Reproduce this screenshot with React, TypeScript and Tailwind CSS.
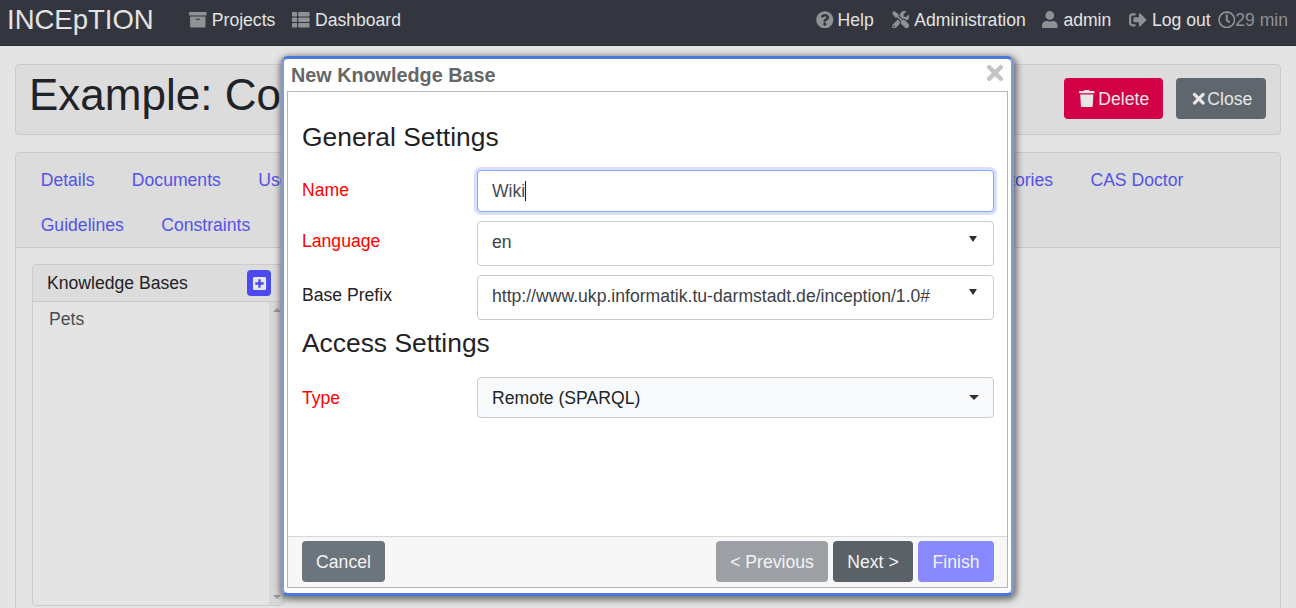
import React from "react";
import {
  FaArchive, FaThList, FaQuestionCircle, FaTools, FaUser, FaSignOutAlt, FaRegClock,
  FaTrash, FaTimes, FaPlusSquare,
} from "react-icons/fa";

function NavItem({ icon, label, className = "" }: { icon: React.ReactNode; label: string; className?: string }) {
  return (
    <a className={"flex items-center gap-[5px] text-[#e3e3e3] " + className}>
      <span className="text-[#8f9195]">{icon}</span>
      <span>{label}</span>
    </a>
  );
}

function Tab({ children }: { children: React.ReactNode }) {
  return <a className="px-[18.7px] h-[45px] flex items-center text-[#5353e6] whitespace-nowrap">{children}</a>;
}

function Caret({ className = "" }: { className?: string }) {
  return <span className={"w-0 h-0 border-x-[4.5px] border-x-transparent border-t-[6px] border-t-[#2f2f2f] " + className} />;
}

export default function App() {
  return (
    <div
      className="relative h-[608px] w-full overflow-hidden bg-[#e4e4e4] text-[17.6px] leading-[26px] text-[#1f2226]"
      style={{ fontFamily: '"Liberation Sans", Arial, sans-serif' }}
    >
      <nav className="h-[46px] bg-[#33363e] border-b border-[#2a2d33] flex items-center justify-between pl-[7px] pr-[8px] pb-[6px]">
        <div className="flex items-center">
          <span className="text-[27.5px] text-[#e3e3e3] mr-[35.5px]">INCEpTION</span>
          <NavItem icon={<FaArchive />} label="Projects" className="mr-[17px]" />
          <NavItem icon={<FaThList />} label="Dashboard" />
        </div>
        <div className="flex items-center">
          <a className="flex items-center gap-[4px] text-[#e3e3e3] mr-[18px]">
            <span className="text-[#8f9195]"><FaQuestionCircle /></span>
            <span>Help</span>
          </a>
          <NavItem icon={<FaTools />} label="Administration" className="mr-[15px]" />
          <NavItem icon={<FaUser />} label="admin" className="mr-[18px]" />
          <NavItem icon={<FaSignOutAlt />} label="Log out" className="mr-[7px]" />
          <span className="flex items-center text-[#8f9195]">
            <FaRegClock />
            <span>29 min</span>
          </span>
        </div>
      </nav>

      <div className="px-[15px] pt-[18px]">
        <div className="h-[71px] bg-[#dcdcdc] border border-[#cbcbcb] rounded-[4px] flex items-center justify-between pl-[13px] pr-[14px]">
          <h1 className="text-[44px] leading-[52px] -mt-[9px] whitespace-nowrap">Example: Concept Linking</h1>
          <div className="flex items-center gap-[13px] -mt-[2px]">
            <button className="h-[41px] w-[99px] bg-[#d20044] text-[#e6e6e6] rounded-[4px] flex items-center justify-center gap-[3px]">
              <FaTrash className="text-[17.6px]" /> Delete
            </button>
            <button className="h-[41px] w-[90px] bg-[#5f666d] text-[#e6e6e6] rounded-[4px] flex items-center justify-center">
              <FaTimes className="text-[17.6px]" /> Close
            </button>
          </div>
        </div>

        <div className="mt-[17px] h-[500px] border border-[#cbcbcb] rounded-[4px]">
          <div className="bg-[#dcdcdc] border-b border-[#c8c8c8] h-[95px] pl-[6px] pr-[78px] pt-[4px] flex flex-wrap content-start w-full rounded-t-[4px]">
            <Tab>Details</Tab>
            <Tab>Documents</Tab>
            <Tab>Users</Tab>
            <Tab>Layers</Tab>
            <Tab>Knowledge Bases</Tab>
            <Tab>Recommenders</Tab>
            <div className="ml-auto flex">
              <Tab>Document Repositories</Tab>
              <Tab>CAS Doctor</Tab>
            </div>
            <Tab>Guidelines</Tab>
            <Tab>Constraints</Tab>
          </div>
          <div className="pt-[16px] pl-[16px]">
            <div className="w-[253px] h-[342px] border border-[#cbcbcb] rounded-[4px] flex flex-col">
              <div className="h-[37px] shrink-0 bg-[#dcdcdc] border-b border-[#c8c8c8] flex items-center justify-between pl-[14px] pr-[13px] rounded-t-[4px]">
                <span>Knowledge Bases</span>
                <button className="w-[24px] h-[26px] rounded-[4px] bg-[#4a4aee] text-[#e6e6e6] flex items-center justify-center text-[15px]">
                  <FaPlusSquare />
                </button>
              </div>
              <div className="flex-1 flex">
                <div className="flex-1 pl-[16px] pt-[4px] text-[#494d52]">Pets</div>
                <div className="w-[15px] bg-[#d7d7d7] flex flex-col justify-between items-center py-[6px]">
                  <span className="w-0 h-0 border-x-[4px] border-x-transparent border-b-[4px] border-b-[#9a9a9a]" />
                  <span className="w-0 h-0 border-x-[4px] border-x-transparent border-t-[4px] border-t-[#9a9a9a]" />
                </div>
              </div>
            </div>
          </div>
        </div>
      </div>

      <div className="absolute left-[281px] top-[56px] w-[733px] h-[540px] bg-white border-x-[3px] border-y-[3px] border-x-[#7f9ccf] border-y-[#4a78dc] rounded-[7px] shadow-[1px_2px_6px_2px_rgba(0,0,0,0.5)] flex flex-col">
        <div className="relative h-[32px] shrink-0 pl-[7px] pt-[2px] flex items-start justify-between">
          <span className="text-[19.8px] leading-[28px] font-bold text-[#666666]">New Knowledge Base</span>
          <FaTimes className="text-[#c4c4c4] text-[24px] mr-[4px]" />
        </div>
        <div className="mx-[3px] mb-[5px] flex-1 border border-[#b5b5b5] flex flex-col min-h-0">
          <div className="flex-1 pl-[14px] pr-[13px] pt-[29px]">
            <h2 className="text-[26.4px] leading-[32px]">General Settings</h2>
            <div className="mt-[17px] flex flex-col">
              <div className="flex items-start h-[51px]">
                <label className="w-[175px] text-[#ff0000] pt-[7px]">Name</label>
                <div className="flex-1 h-[42px] bg-white border border-[#80a8ff] rounded-[4px] shadow-[0_0_0_3px_#d9deff] px-[14px] flex items-center text-[#494d52]">
                  Wiki<span className="w-px h-[20px] bg-[#222222]" />
                </div>
              </div>
              <div className="flex items-start h-[54px]">
                <label className="w-[175px] text-[#ff0000] pt-[7px]">Language</label>
                <div className="flex-1 h-[45px] bg-white border border-[#cccccc] rounded-[4px] pl-[14px] pr-[16px] flex items-start justify-between pt-[7px] text-[#3c4146]">
                  <span>en</span>
                  <Caret className="mt-[7px]" />
                </div>
              </div>
              <div className="flex items-start h-[45px]">
                <label className="w-[175px] pt-[7px]">Base Prefix</label>
                <div className="flex-1 h-[45px] bg-white border border-[#cccccc] rounded-[4px] pl-[14px] pr-[16px] flex items-start justify-between pt-[7px] text-[#3c4146]">
                  <span>http://www.ukp.informatik.tu-darmstadt.de/inception/1.0#</span>
                  <Caret className="mt-[6px]" />
                </div>
              </div>
            </div>
            <h2 className="text-[26.4px] leading-[32px] mt-[7px]">Access Settings</h2>
            <div className="mt-[18px] flex items-start">
              <label className="w-[175px] text-[#ff0000] pt-[8px]">Type</label>
              <div className="flex-1 h-[41px] bg-[#f8f9fa] border border-[#cccccc] rounded-[4px] pl-[14px] pr-[14px] flex items-center justify-between text-[#212529]">
                <span>Remote (SPARQL)</span>
                <span className="w-0 h-0 border-x-[5px] border-x-transparent border-t-[5px] border-t-[#2f2f2f]" />
              </div>
            </div>
          </div>
          <div className="h-[51px] shrink-0 bg-[#f7f7f7] border-t border-[#d8d8d8] pl-[14px] pr-[13px] pt-[4px] flex items-start justify-between">
            <button className="h-[41px] w-[83px] rounded-[4px] bg-[#6c757d] text-[#f3f3f3]">Cancel</button>
            <div className="flex gap-[5px]">
              <button className="h-[41px] w-[112px] rounded-[4px] bg-[#9da1a6] text-[#f3f3f3]">&lt; Previous</button>
              <button className="h-[41px] w-[80px] rounded-[4px] bg-[#5a6268] text-[#f3f3f3]">Next &gt;</button>
              <button className="h-[41px] w-[76px] rounded-[4px] bg-[#8888ff] text-[#f3f3f3]">Finish</button>
            </div>
          </div>
        </div>
      </div>
    </div>
  );
}
